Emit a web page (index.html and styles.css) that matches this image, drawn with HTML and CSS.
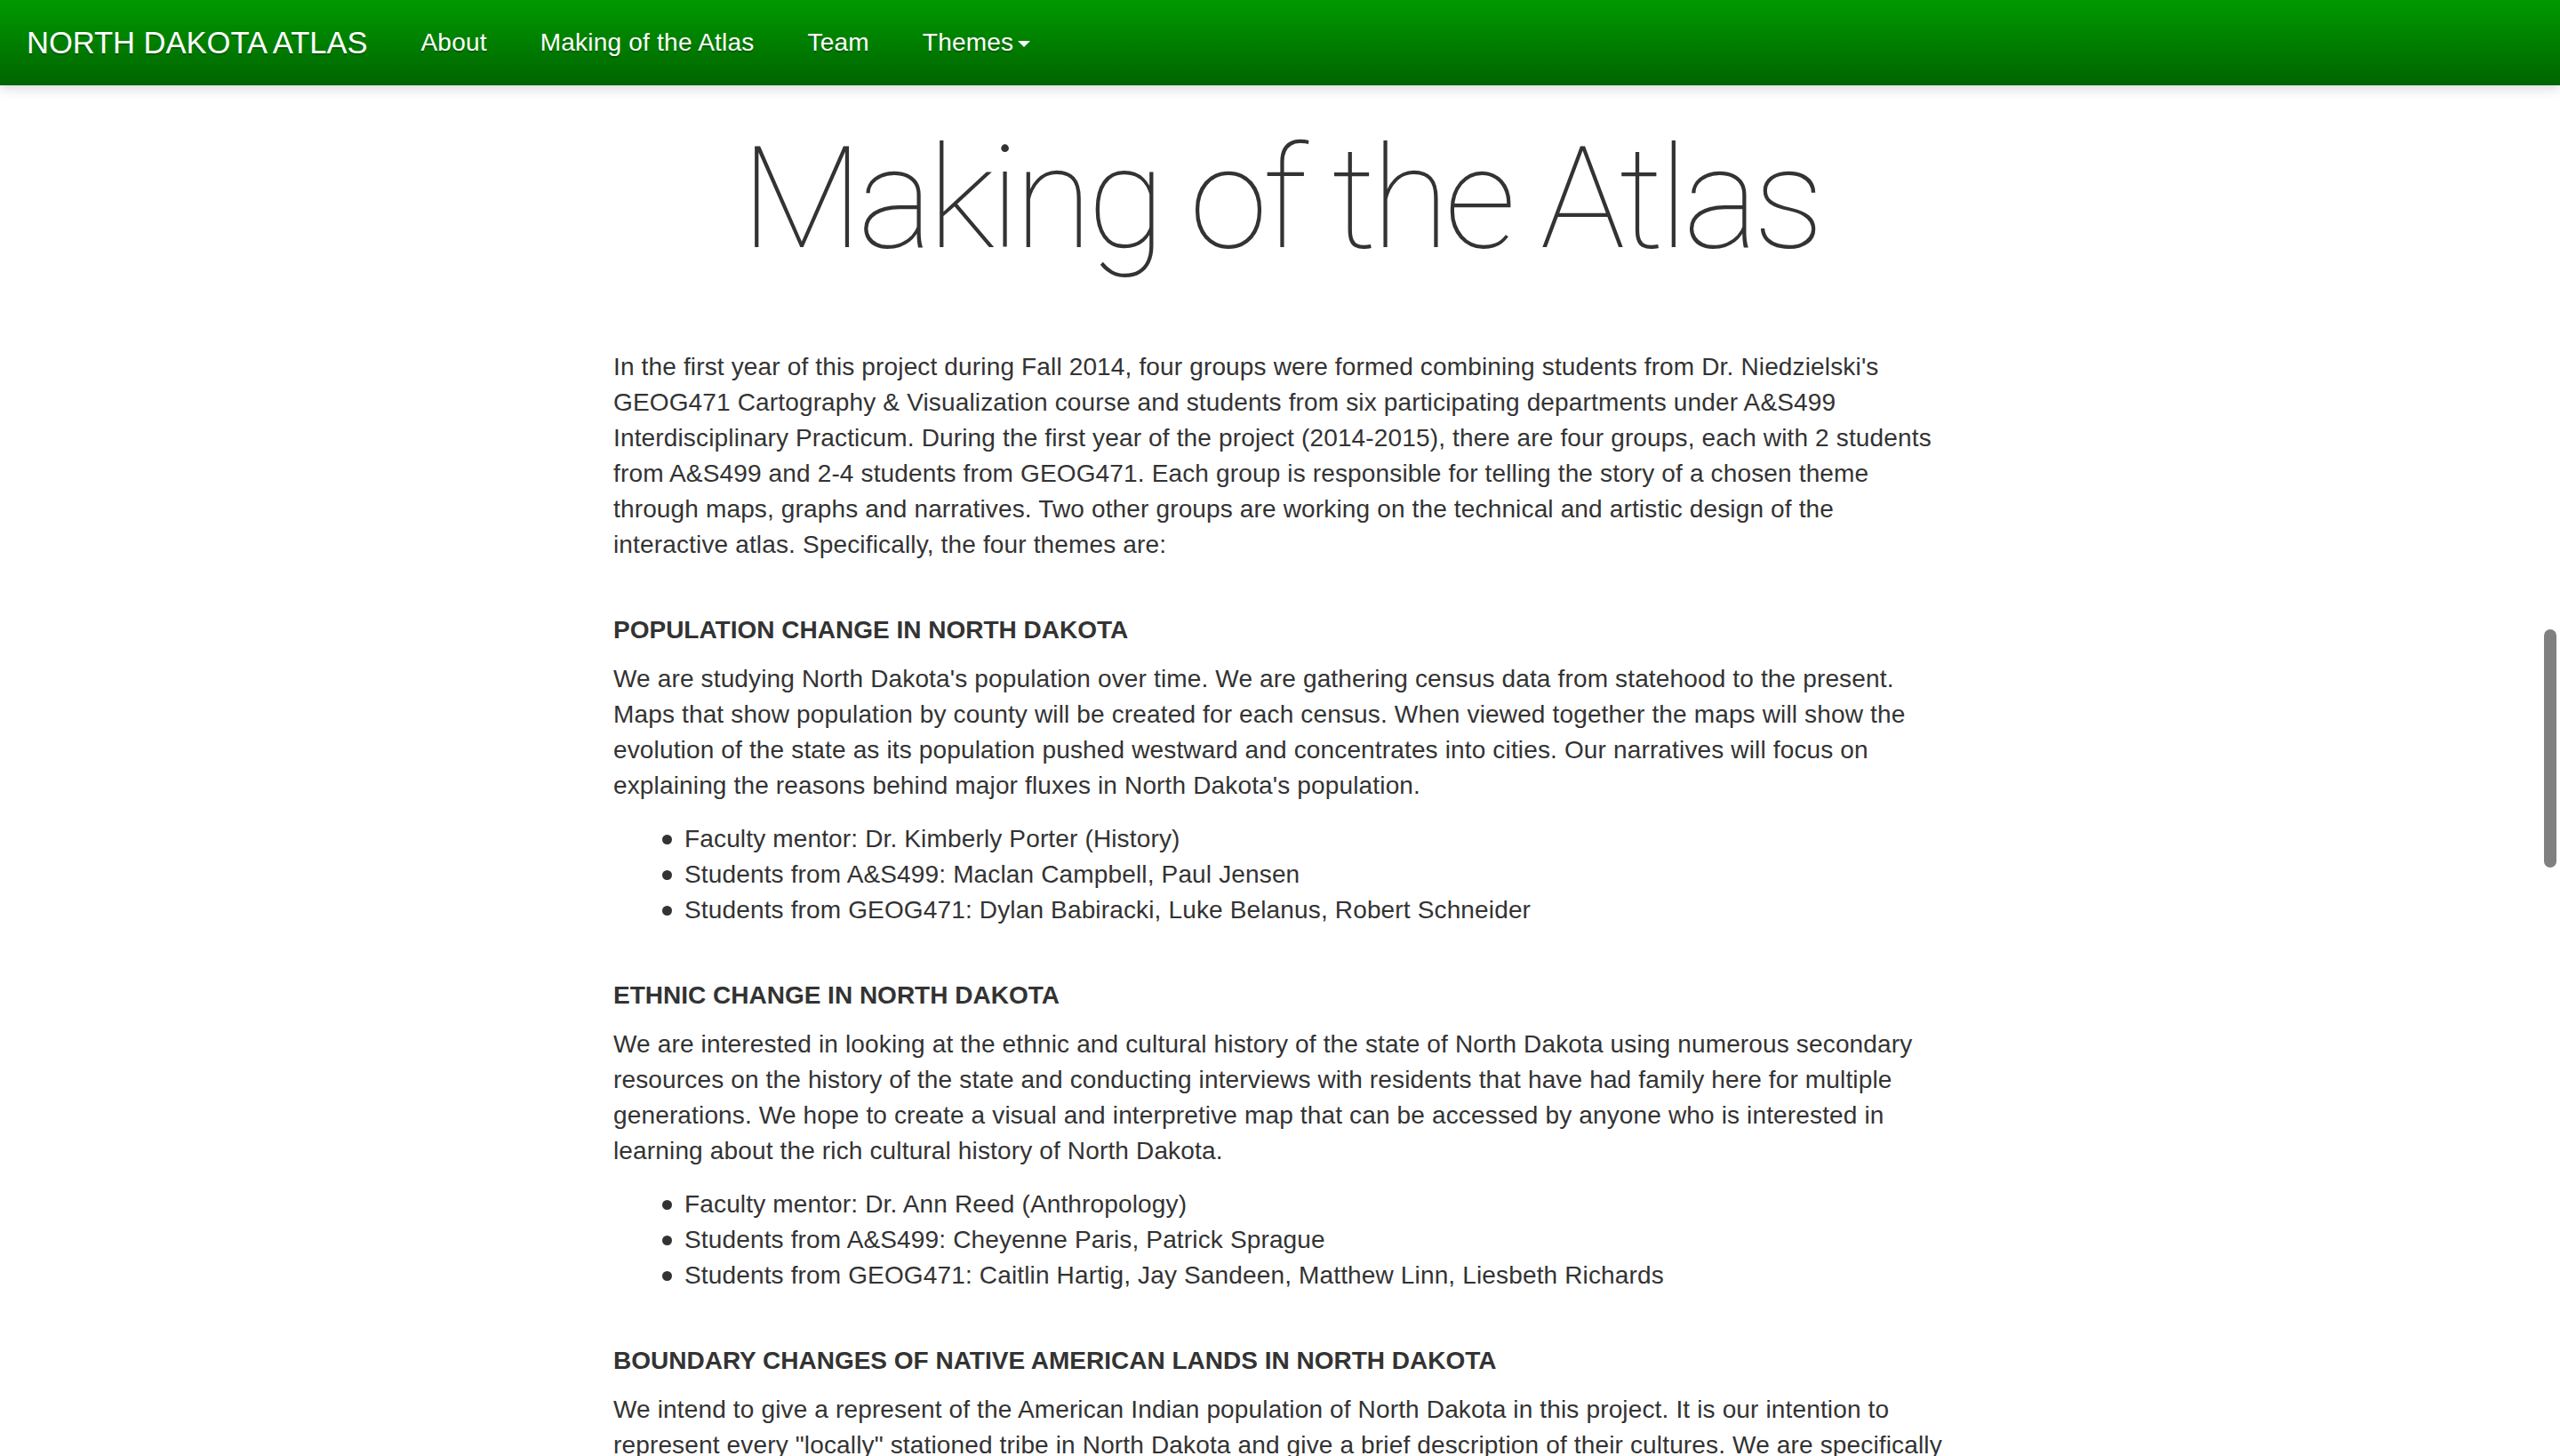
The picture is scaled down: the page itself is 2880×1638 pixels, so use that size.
FILE: index.html
```html
<!DOCTYPE html>
<html lang="en">
<head>
<meta charset="utf-8">
<title>Making of the Atlas - North Dakota Atlas</title>
<link rel="stylesheet" href="styles.css">
</head>
<body>
<nav class="navbar">
  <a class="brand" href="#">NORTH DAKOTA ATLAS</a>
  <ul class="nav">
    <li><a href="#">About</a></li>
    <li><a href="#">Making of the Atlas</a></li>
    <li><a href="#">Team</a></li>
    <li><a href="#">Themes<span class="caret"></span></a></li>
  </ul>
</nav>
<main class="page">
  <h1 class="title">Making of the Atlas</h1>
  <div class="content">
    <p>In the first year of this project during Fall 2014, four groups were formed combining students from Dr. Niedzielski's GEOG471 Cartography &amp; Visualization course and students from six participating departments under A&amp;S499 Interdisciplinary Practicum. During the first year of the project (2014-2015), there are four groups, each with 2 students from A&amp;S499 and 2-4 students from GEOG471. Each group is responsible for telling the story of a chosen theme through maps, graphs and narratives. Two other groups are working on the technical and artistic design of the interactive atlas. Specifically, the four themes are:</p>

    <h5 class="theme">POPULATION CHANGE IN NORTH DAKOTA</h5>
    <p>We are studying North Dakota's population over time. We are gathering census data from statehood to the present. Maps that show population by county will be created for each census. When viewed together the maps will show the evolution of the state as its population pushed westward and concentrates into cities. Our narratives will focus on explaining the reasons behind major fluxes in North Dakota's population.</p>
    <ul class="members">
      <li>Faculty mentor: Dr. Kimberly Porter (History)</li>
      <li>Students from A&amp;S499: Maclan Campbell, Paul Jensen</li>
      <li>Students from GEOG471: Dylan Babiracki, Luke Belanus, Robert Schneider</li>
    </ul>

    <h5 class="theme">ETHNIC CHANGE IN NORTH DAKOTA</h5>
    <p>We are interested in looking at the ethnic and cultural history of the state of North Dakota using numerous secondary resources on the history of the state and conducting interviews with residents that have had family here for multiple generations. We hope to create a visual and interpretive map that can be accessed by anyone who is interested in learning about the rich cultural history of North Dakota.</p>
    <ul class="members">
      <li>Faculty mentor: Dr. Ann Reed (Anthropology)</li>
      <li>Students from A&amp;S499: Cheyenne Paris, Patrick Sprague</li>
      <li>Students from GEOG471: Caitlin Hartig, Jay Sandeen, Matthew Linn, Liesbeth Richards</li>
    </ul>

    <h5 class="theme">BOUNDARY CHANGES OF NATIVE AMERICAN LANDS IN NORTH DAKOTA</h5>
    <p>We intend to give a represent of the American Indian population of North Dakota in this project. It is our intention to represent every "locally" stationed tribe in North Dakota and give a brief description of their cultures. We are specifically looking at how the boundaries of their lands have changed over time.</p>
  </div>
</main>
<div class="scroll-thumb"></div>
</body>
</html>
```

FILE: styles.css
```css
html, body {
  margin: 0;
  padding: 0;
  overflow: hidden;
  background: #ffffff;
}

body {
  font-family: "Liberation Sans", Arial, Helvetica, sans-serif;
  font-size: 28px;
  line-height: 40px;
  color: #333333;
}

.navbar {
  display: flex;
  align-items: center;
  height: 96px;
  background: linear-gradient(to bottom, #009a00 0%, #006400 100%);
  box-shadow: 0 4px 12px rgba(0, 0, 0, 0.15);
  position: relative;
  z-index: 2;
}

.navbar a {
  color: #ffffff;
  text-decoration: none;
  text-shadow: 0 2px 0 rgba(0, 0, 0, 0.25);
}

.brand {
  font-size: 34.5px;
  line-height: 40px;
  padding: 0 30px;
}

.nav {
  display: flex;
  list-style: none;
  margin: 0;
  padding: 0;
}

.nav a {
  display: flex;
  align-items: center;
  padding: 0 30px;
  font-size: 28px;
  line-height: 40px;
  letter-spacing: 0.22px;
}

.caret {
  display: inline-block;
  width: 0;
  height: 0;
  margin-left: 5px;
  margin-top: 2px;
  border-top: 7px solid #ffffff;
  border-left: 7px solid transparent;
  border-right: 7px solid transparent;
}

.page {
  padding-top: 40px;
}

.title {
  margin: 0 0 81px;
  text-align: center;
  font-family: Roboto, "Liberation Sans", sans-serif;
  font-weight: 100;
  font-size: 160px;
  line-height: 176px;
  letter-spacing: -5.6px;
  color: #333333;
}

.content {
  width: 1500px;
  margin: 0 auto;
  letter-spacing: 0.15px;
}

.content p {
  margin: 0 0 20px;
}

.theme {
  font-size: 28px;
  font-weight: bold;
  line-height: 31px;
  letter-spacing: 0;
  margin: 60px 0 20px;
}

.members {
  list-style: none;
  margin: 0 0 20px;
  padding-left: 80px;
}

.members li {
  position: relative;
}

.members li::before {
  content: "";
  position: absolute;
  left: -25px;
  top: 15px;
  width: 11px;
  height: 11px;
  border-radius: 50%;
  background: #333333;
}

.scroll-thumb {
  position: fixed;
  right: 4px;
  top: 708px;
  width: 14px;
  height: 268px;
  border-radius: 7px;
  background: #808080;
}
```
